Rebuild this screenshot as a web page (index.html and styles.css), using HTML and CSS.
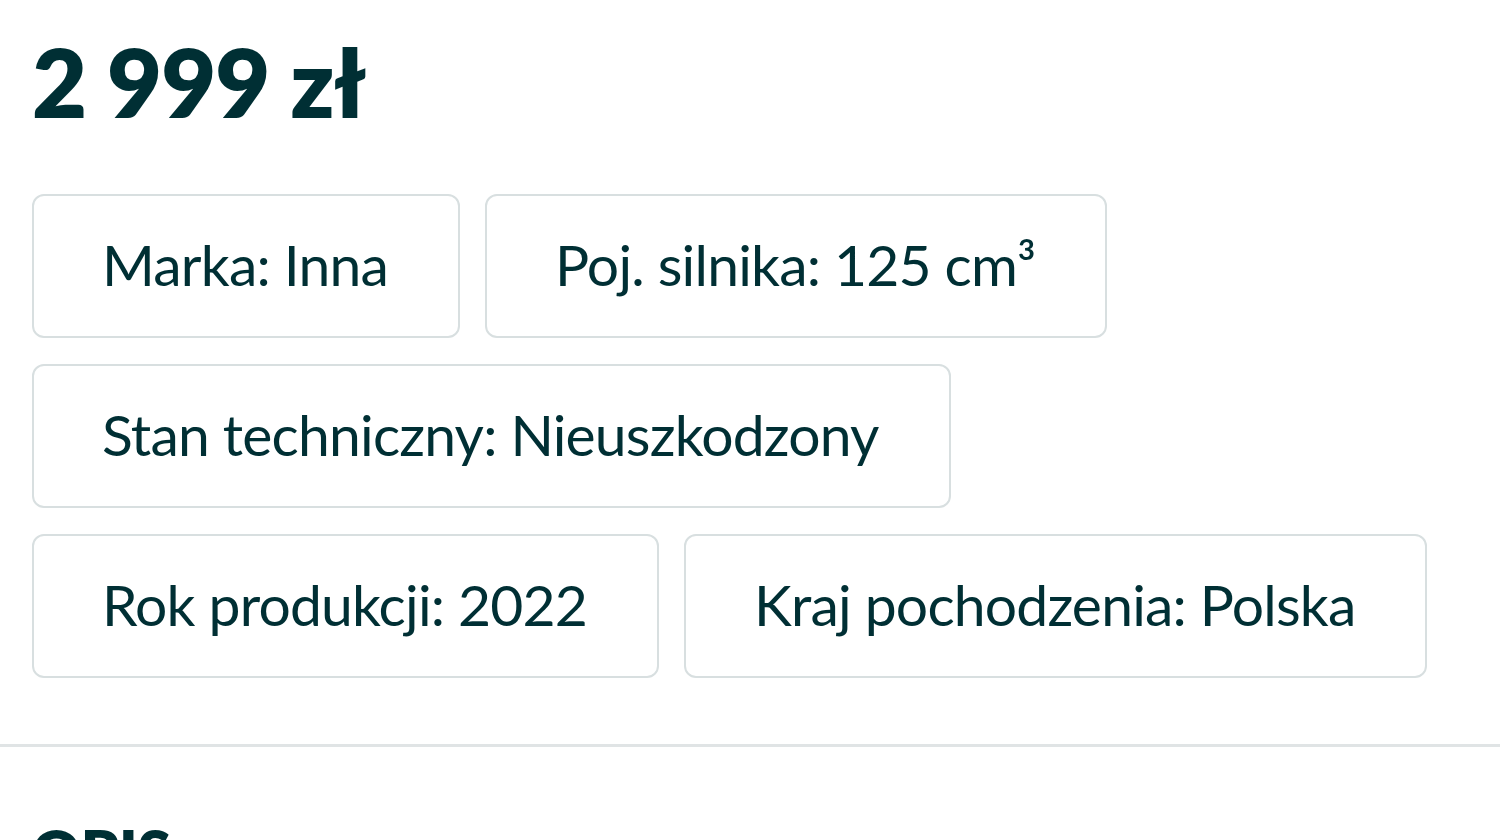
FILE: index.html
```html
<!DOCTYPE html>
<html lang="pl">
<head>
  <meta charset="UTF-8" />
  <meta name="viewport" content="width=device-width, initial-scale=1.0"/>
  <title>2 999 zł</title>
  <link rel="stylesheet" href="styles.css">
</head>
<body>
  <div class="offer">
    <h3 class="price">2 999 zł</h3>
    <ul class="params">
      <li class="param">Marka: Inna</li>
      <li class="param">Poj. silnika: 125 cm³</li>
      <li class="param">Stan techniczny: Nieuszkodzony</li>
      <li class="param">Rok produkcji: 2022</li>
      <li class="param">Kraj pochodzenia: Polska</li>
    </ul>
  </div>

  <hr class="divider">

  <div class="offer">
    <h3 class="section-title">OPIS</h3>
  </div>
</body>
</html>
```
FILE: styles.css
```css
body {
  margin: 0;
  font-family: Lato, "Noto Sans", sans-serif;
  background-color: #ffffff;
  color: #002f34;
  overflow: hidden;
}
.offer {
  padding: 0 32px;
}
.price {
  margin: 0;
  padding-top: 24px;
  font-size: 95px;
  font-weight: 800;
  line-height: 1.2;
  letter-spacing: -1px;
}
.params {
  list-style: none;
  margin: 0;
  padding: 0;
  padding-top: 56px;
  display: flex;
  flex-wrap: wrap;
  gap: 26px 25px;
  max-width: 1420px;
}
.param {
  box-sizing: border-box;
  height: 144px;
  padding: 0 70px 5px 68px;
  display: flex;
  align-items: center;
  border: 2px solid #d8dfe0;
  border-radius: 12px;
  font-size: 57px;
  font-weight: 400;
  letter-spacing: -0.8px;
}
.divider {
  margin: 66px 0 0;
  border: none;
  height: 3px;
  background-color: #e0e4e5;
}
.section-title {
  margin: 0;
  padding-top: 68px;
  font-size: 60px;
  font-weight: 800;
}
```
